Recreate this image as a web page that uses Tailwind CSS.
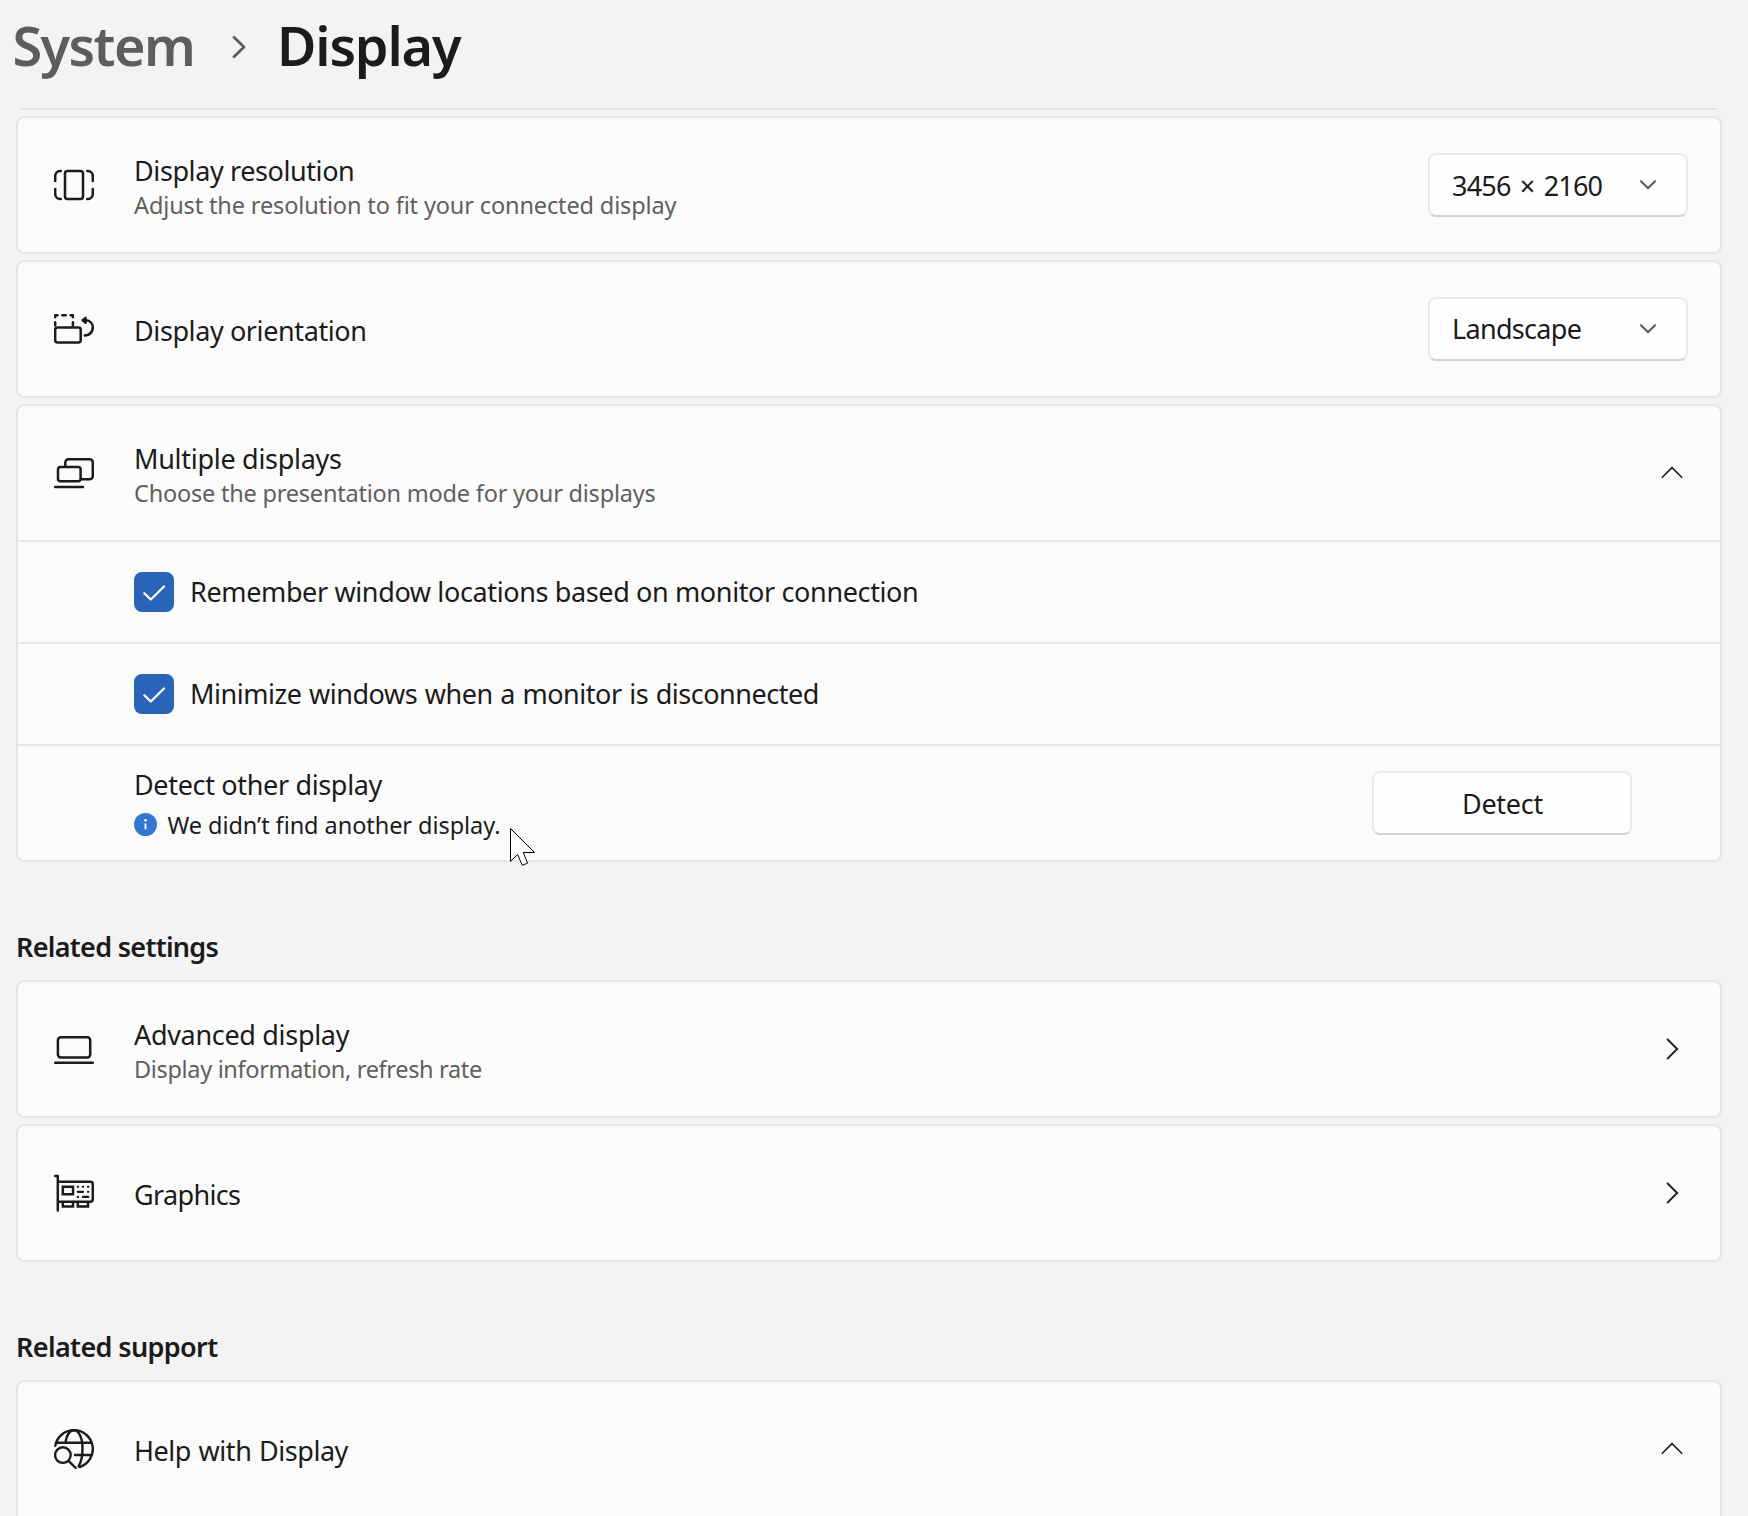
<!DOCTYPE html>
<html lang="en">
<head>
<meta charset="utf-8">
<title>System - Display</title>
<script src="https://cdn.jsdelivr.net/npm/@tailwindcss/browser@4"></script>
</head>
<body class="relative h-[1516px] overflow-hidden bg-[#f3f3f3] text-[27px] leading-[34px] text-[#1b1b1b] font-['Noto_Sans',sans-serif]">

<!-- Breadcrumb -->
<header class="flex h-[108px] items-start pt-[13px] pl-[12.5px] text-[54px] leading-[64px] font-semibold">
  <span class="w-[219.5px] tracking-[-1.6px] text-[#5d5d5d]">System</span>
  <svg class="mt-[22px] h-6 w-[14px]" viewBox="0 0 14 24" fill="none" stroke="#5d5d5d" stroke-width="2.8" stroke-linecap="round" stroke-linejoin="round"><path d="M2 2.2 12 12 2 21.8"/></svg>
  <h1 class="ml-[31px] tracking-[-1.2px]">Display</h1>
</header>

<main class="ml-4 w-[1706px]">
  <div class="mx-1 h-[2px] rounded-b-sm bg-[#e5e5e5]"></div>

  <div class="mt-[6px] flex flex-col gap-[6px]">
    <section class="flex h-[138px] items-center rounded-lg border-2 border-[#e5e5e5] bg-[#fbfbfb] pr-8 pl-9">
      <svg class="h-10 w-10" viewBox="0 0 40 40" fill="none" stroke="#1b1b1b" stroke-width="2.5" stroke-linecap="round" stroke-linejoin="round"><rect x="11" y="6" width="18" height="28" rx="2.5"/><path d="M6.800 6H6A5 5 0 0 0 1.200 11V16M1.200 24V29A5 5 0 0 0 6 34H6.800M33.200 6H34A5 5 0 0 1 38.800 11V16M38.800 24V29A5 5 0 0 1 34 34H33.200"/></svg>
      <div class="ml-10 flex-1 pt-[5px]">
        <div class="tracking-[-0.4px]">Display resolution</div>
        <div class="text-[23.5px] tracking-[-0.133px] text-[#5f5f5f]">Adjust the resolution to fit your connected display</div>
      </div>
      <button class="flex h-16 w-[260px] items-center justify-between rounded-lg border-2 border-[#ebebeb] border-b-[#d2d2d2] bg-[#fefefe] pr-[30px] pl-[22px]">
        <span class="pt-px tracking-[-0.8px] [word-spacing:3px]">3456 × 2160</span>
        <svg class="h-[10px] w-4" viewBox="0 0 16 10" fill="none" stroke="#5d5d5d" stroke-width="2.1" stroke-linecap="round" stroke-linejoin="round"><path d="M1 1.300 8 8.300 15 1.300"/></svg>
      </button>
    </section>

    <section class="flex h-[138px] items-center rounded-lg border-2 border-[#e5e5e5] bg-[#fbfbfb] pr-8 pl-9">
      <svg class="h-10 w-10" viewBox="0 0 40 40" fill="none" stroke="#1b1b1b" stroke-width="2.500" stroke-linecap="round" stroke-linejoin="round"><rect x="1.200" y="18.500" width="25.500" height="15" rx="2.200"/><path d="M1.200 8.200V6.200H3.500M8.200 6.200H11.800M16.600 6.200H18.900V8.200M1.200 13.200V16.500M18.900 13.200V16.500"/><path d="M32 11.200C36 11.500 38.800 14.500 38.800 18.600C38.800 23 35.300 26.600 30.700 26.600"/><path d="M28.200 11.200 31.800 8.400V14.200Z" fill="#1b1b1b" stroke-width="1.800"/></svg>
      <div class="ml-10 flex-1 pt-1 tracking-[-0.4px]">Display orientation</div>
      <button class="flex h-16 w-[260px] items-center justify-between rounded-lg border-2 border-[#ebebeb] border-b-[#d2d2d2] bg-[#fefefe] pr-[30px] pl-[22px]">
        <span class="tracking-[-0.7px]">Landscape</span>
        <svg class="h-[10px] w-4" viewBox="0 0 16 10" fill="none" stroke="#5d5d5d" stroke-width="2.1" stroke-linecap="round" stroke-linejoin="round"><path d="M1 1.300 8 8.300 15 1.300"/></svg>
      </button>
    </section>

    <section class="rounded-lg border-2 border-[#e5e5e5] bg-[#fbfbfb]">
      <div class="flex h-[136px] items-center border-b-2 border-[#e5e5e5] pr-9 pl-9">
        <svg class="h-10 w-10" viewBox="0 0 40 40" fill="none" stroke="#1b1b1b" stroke-width="2.500" stroke-linecap="round" stroke-linejoin="round"><rect x="4" y="14" width="22.600" height="14.200" rx="2.500"/><path d="M11.300 13V9.500A3.200 3.200 0 0 1 14.500 6.300H35.600A3.200 3.200 0 0 1 38.800 9.500V23A3.200 3.200 0 0 1 35.600 26.200H28M1.200 34H29"/></svg>
        <div class="ml-10 flex-1 pt-[5px]">
          <div class="tracking-[-0.29px]">Multiple displays</div>
          <div class="text-[23.5px] tracking-[-0.21px] text-[#5f5f5f]">Choose the presentation mode for your displays</div>
        </div>
        <svg class="h-6 w-6" viewBox="0 0 24 24" fill="none" stroke="#1b1b1b" stroke-width="1.6"><path d="M1.800 16.800 12 6.700 22.200 16.800"/></svg>
      </div>
      <label class="flex h-[102px] items-center gap-4 border-b-2 border-[#e5e5e5] pl-[116px]">
        <svg class="h-10 w-10 rounded-lg bg-[#2a64b8]" viewBox="0 0 40 40" fill="none" stroke="#fff" stroke-width="2.2" stroke-linecap="round" stroke-linejoin="round"><path d="M10.300 21.200 16.800 27.500 30 14.500"/></svg>
        <span class="pb-px tracking-[-0.37px]">Remember window locations based on monitor connection</span>
      </label>
      <label class="flex h-[102px] items-center gap-4 border-b-2 border-[#e5e5e5] pl-[116px]">
        <svg class="h-10 w-10 rounded-lg bg-[#2a64b8]" viewBox="0 0 40 40" fill="none" stroke="#fff" stroke-width="2.2" stroke-linecap="round" stroke-linejoin="round"><path d="M10.300 21.200 16.800 27.500 30 14.500"/></svg>
        <span class="pb-px tracking-[-0.47px] [word-spacing:1px]">Minimize windows when a monitor is disconnected</span>
      </label>
      <div class="flex h-[114px] items-center pr-[88px] pl-[116px]">
        <div class="flex-1 pt-[3px] leading-10">
          <div class="tracking-[-0.34px]">Detect other display</div>
          <div class="flex items-center gap-[10.5px] text-[23.5px] tracking-[-0.06px]">
            <svg class="h-[23px] w-[23px]" viewBox="0 0 23 23"><circle cx="11.500" cy="11.500" r="11.500" fill="#3277d1"/><circle cx="11.500" cy="7.200" r="1.300" fill="#fff"/><rect x="10.600" y="10.200" width="1.800" height="6.300" rx=".9" fill="#fff"/></svg>
            <span>We didn’t find another display.</span>
          </div>
        </div>
        <button class="h-16 w-[260px] rounded-lg border-2 border-[#ebebeb] border-b-[#d2d2d2] bg-[#fefefe] pt-[2px] pl-px tracking-[-0.24px]">Detect</button>
      </div>
    </section>
  </div>

  <h2 class="h-[118px] pt-[67px] leading-9 font-semibold tracking-[-0.7px]">Related settings</h2>
  <div class="flex flex-col gap-[6px]">
    <section class="flex h-[138px] items-center rounded-lg border-2 border-[#e5e5e5] bg-[#fbfbfb] pr-9 pl-9">
      <svg class="h-10 w-10" viewBox="0 0 40 40" fill="none" stroke="#1b1b1b" stroke-width="2.500" stroke-linecap="round" stroke-linejoin="round"><rect x="3.900" y="8.300" width="32.300" height="20.300" rx="3"/><path d="M1.200 33.700H38.800"/></svg>
      <div class="ml-10 flex-1 pt-[5px]">
        <div class="tracking-[-0.32px]">Advanced display</div>
        <div class="text-[23.5px] tracking-[-0.33px] text-[#5f5f5f]">Display information, refresh rate</div>
      </div>
      <svg class="h-6 w-6" viewBox="0 0 24 24" fill="none" stroke="#1b1b1b" stroke-width="1.900"><path d="M7 1.800 17.200 12 7 22.200"/></svg>
    </section>
    <section class="flex h-[138px] items-center rounded-lg border-2 border-[#e5e5e5] bg-[#fbfbfb] pr-9 pl-9">
      <svg class="h-10 w-10" viewBox="0 0 40 40" fill="none" stroke="#1b1b1b" stroke-width="2.500" stroke-linecap="round" stroke-linejoin="round"><path d="M1.200 3H3.800V37.500M4 8.800H36.300A2.500 2.500 0 0 1 38.800 11.300V26.300A2.500 2.500 0 0 1 36.300 28.800H4"/><path d="M8.800 13.800H19V21.200H8.800ZM8.800 29V33.600H19V29M23.800 29V33.600H34V29" stroke-linejoin="miter"/><path d="M23.800 13.800H24M28.900 13.800H29.100M34 13.800H34.200M23.800 18.800H29M34 18.800H34.200M23.800 23.900H24M28.900 23.900H34.200" stroke-width="2.300"/></svg>
      <div class="ml-10 flex-1 pt-1 tracking-[-0.65px]">Graphics</div>
      <svg class="h-6 w-6" viewBox="0 0 24 24" fill="none" stroke="#1b1b1b" stroke-width="1.900"><path d="M7 1.800 17.200 12 7 22.200"/></svg>
    </section>
  </div>

  <h2 class="h-[118px] pt-[67px] leading-9 font-semibold tracking-[-0.63px]">Related support</h2>
  <section class="h-60 rounded-lg border-2 border-[#e5e5e5] bg-[#fbfbfb]">
    <div class="flex h-[136px] items-center border-b-2 border-[#e5e5e5] pr-9 pl-9">
      <svg class="h-10 w-10" viewBox="0 0 40 40" fill="none" stroke="#1b1b1b" stroke-width="2.400" stroke-linecap="round" stroke-linejoin="round"><path d="M1.300 16.800A18.900 18.900 0 1 1 25.800 38M2.600 13.700H37.600M21 26H37.600"/><path d="M11.500 13.500C12.800 5.500 16 1.300 20 1.300C25 1.300 28.500 9 28.500 19.500C28.500 27 27 33.500 24.600 37.300"/><circle cx="8.900" cy="26.100" r="7.800"/><path d="M14.500 31.800 21.700 39"/></svg>
      <div class="ml-10 flex-1 pt-1 tracking-[-0.45px] [word-spacing:1px]">Help with Display</div>
      <svg class="h-6 w-6" viewBox="0 0 24 24" fill="none" stroke="#1b1b1b" stroke-width="1.600"><path d="M1.800 16.800 12 6.700 22.200 16.800"/></svg>
    </div>
  </section>
</main>

<!-- Mouse pointer -->
<svg class="absolute top-[827px] left-[509px] h-10 w-7" viewBox="0 0 28 40" fill="#fff" stroke="#000" stroke-width="1"><path d="M1.500 1.500V34.300L8.600 27.500L13.300 38.300L18.500 36.200L14.300 25.500H25.500Z" /></svg>
</body>
</html>
